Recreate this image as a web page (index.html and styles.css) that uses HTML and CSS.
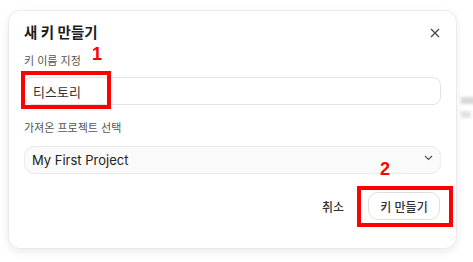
FILE: index.html
```html
<!DOCTYPE html>
<html lang="ko">
<head>
  <meta charset="UTF-8">
  <meta name="viewport" content="width=device-width, initial-scale=1.0">
  <title>새 키 만들기</title>
  <link rel="stylesheet" href="styles.css">
</head>
<body>
  <div class="backdrop">
    <div class="blob"></div>
    <div class="blob short"></div>
  </div>

  <div class="dialog">
    <div class="dialog-header">
      <h2 class="dialog-title">새 키 만들기</h2>
      <button class="close-btn" aria-label="닫기">
        <svg width="10" height="10" viewBox="0 0 10 10">
          <path d="M1 1 L9 9 M9 1 L1 9" stroke="#444" stroke-width="1.2" fill="none"/>
        </svg>
      </button>
    </div>

    <label class="field-label">키 이름 지정</label>
    <div class="text-input">티스토리</div>

    <label class="field-label second">가져온 프로젝트 선택</label>
    <div class="select">
      <span>My First Project</span>
      <svg width="9" height="6" viewBox="0 0 9 6">
        <path d="M1 1 L4.5 4.5 L8 1" stroke="#555" stroke-width="1.2" fill="none"/>
      </svg>
    </div>

    <div class="dialog-footer">
      <button class="cancel-btn">취소</button>
      <button class="create-btn">키 만들기</button>
    </div>

    <!-- 안내용 표시 -->
    <div class="mark mark-1"></div>
    <span class="mark-num num-1">1</span>
    <div class="mark mark-2"></div>
    <span class="mark-num num-2">2</span>
  </div>
</body>
</html>
```

FILE: styles.css
```css
body {
  margin: 0;
  padding: 0;
  background-color: #ffffff;
  font-family: Inter, 'Noto Sans CJK KR', sans-serif;
  overflow: hidden;
  position: relative;
  height: 262px;
}

.backdrop {
  position: absolute;
  left: 461px;
  top: 97px;
  display: flex;
  flex-direction: column;
  gap: 7px;
  filter: blur(1.5px);
}

.blob {
  width: 14px;
  height: 7px;
  background: #d8d8d8;
}

.blob.short {
  width: 10px;
  background: #e2e2e2;
}

.dialog {
  position: relative;
  margin: 10px 0 0 8px;
  width: 449px;
  height: 239px;
  box-sizing: border-box;
  padding: 12px 15px 0 15px;
  background: #fff;
  border: 1px solid #ebebeb;
  border-radius: 12px;
  box-shadow: 0 3px 8px rgba(0,0,0,0.08);
  display: flex;
  flex-direction: column;
}

.dialog-header {
  display: flex;
  justify-content: space-between;
  align-items: center;
  height: 20px;
}

.dialog-title {
  margin: 0;
  font-size: 14.5px;
  font-weight: 700;
  color: #1c1c1c;
  line-height: 20px;
}

.close-btn {
  background: none;
  border: none;
  padding: 0;
  margin-right: 1px;
  width: 10px;
  height: 10px;
  display: flex;
  cursor: pointer;
}

.field-label {
  margin-top: 10px;
  font-size: 11px;
  line-height: 16px;
  color: #555;
}

.field-label.second {
  margin-top: 15px;
}

.text-input {
  margin-top: 8px;
  height: 28px;
  box-sizing: border-box;
  border: 1px solid #e3e3e3;
  border-radius: 8px;
  padding: 0 8px;
  display: flex;
  align-items: center;
  font-size: 13px;
  color: #333;
}

.select {
  margin-top: 10px;
  height: 28px;
  box-sizing: border-box;
  border: 1px solid #ececec;
  background: #fafafa;
  border-radius: 10px;
  padding: 0 7px 0 7px;
  display: flex;
  align-items: center;
  justify-content: space-between;
  font-size: 13px;
  color: #222;
}

.select svg {
  margin-top: -4px;
}

.dialog-footer {
  margin-top: 18px;
  display: flex;
  justify-content: flex-end;
  align-items: center;
  gap: 24px;
}

.cancel-btn {
  background: none;
  border: none;
  padding: 0;
  font-family: inherit;
  font-size: 12px;
  font-weight: 500;
  color: #333;
}

.create-btn {
  height: 28px;
  width: 72px;
  background: #fff;
  border: 1px solid #e0e0e0;
  border-radius: 10px;
  font-family: inherit;
  font-size: 12px;
  font-weight: 500;
  color: #333;
  margin-right: 1px;
}

.mark {
  position: absolute;
  border: 4px solid #ff0000;
  box-sizing: border-box;
}

.mark-1 {
  left: 12px;
  top: 60px;
  width: 90px;
  height: 38px;
}

.mark-2 {
  left: 348px;
  top: 175px;
  width: 96px;
  height: 41px;
}

.mark-num {
  position: absolute;
  color: #ff0000;
  font-family: 'Liberation Sans', Arial, sans-serif;
  font-weight: 700;
  font-size: 18px;
  line-height: 18px;
}

.num-1 {
  left: 83px;
  top: 34px;
}

.num-2 {
  left: 371px;
  top: 149px;
}
```
